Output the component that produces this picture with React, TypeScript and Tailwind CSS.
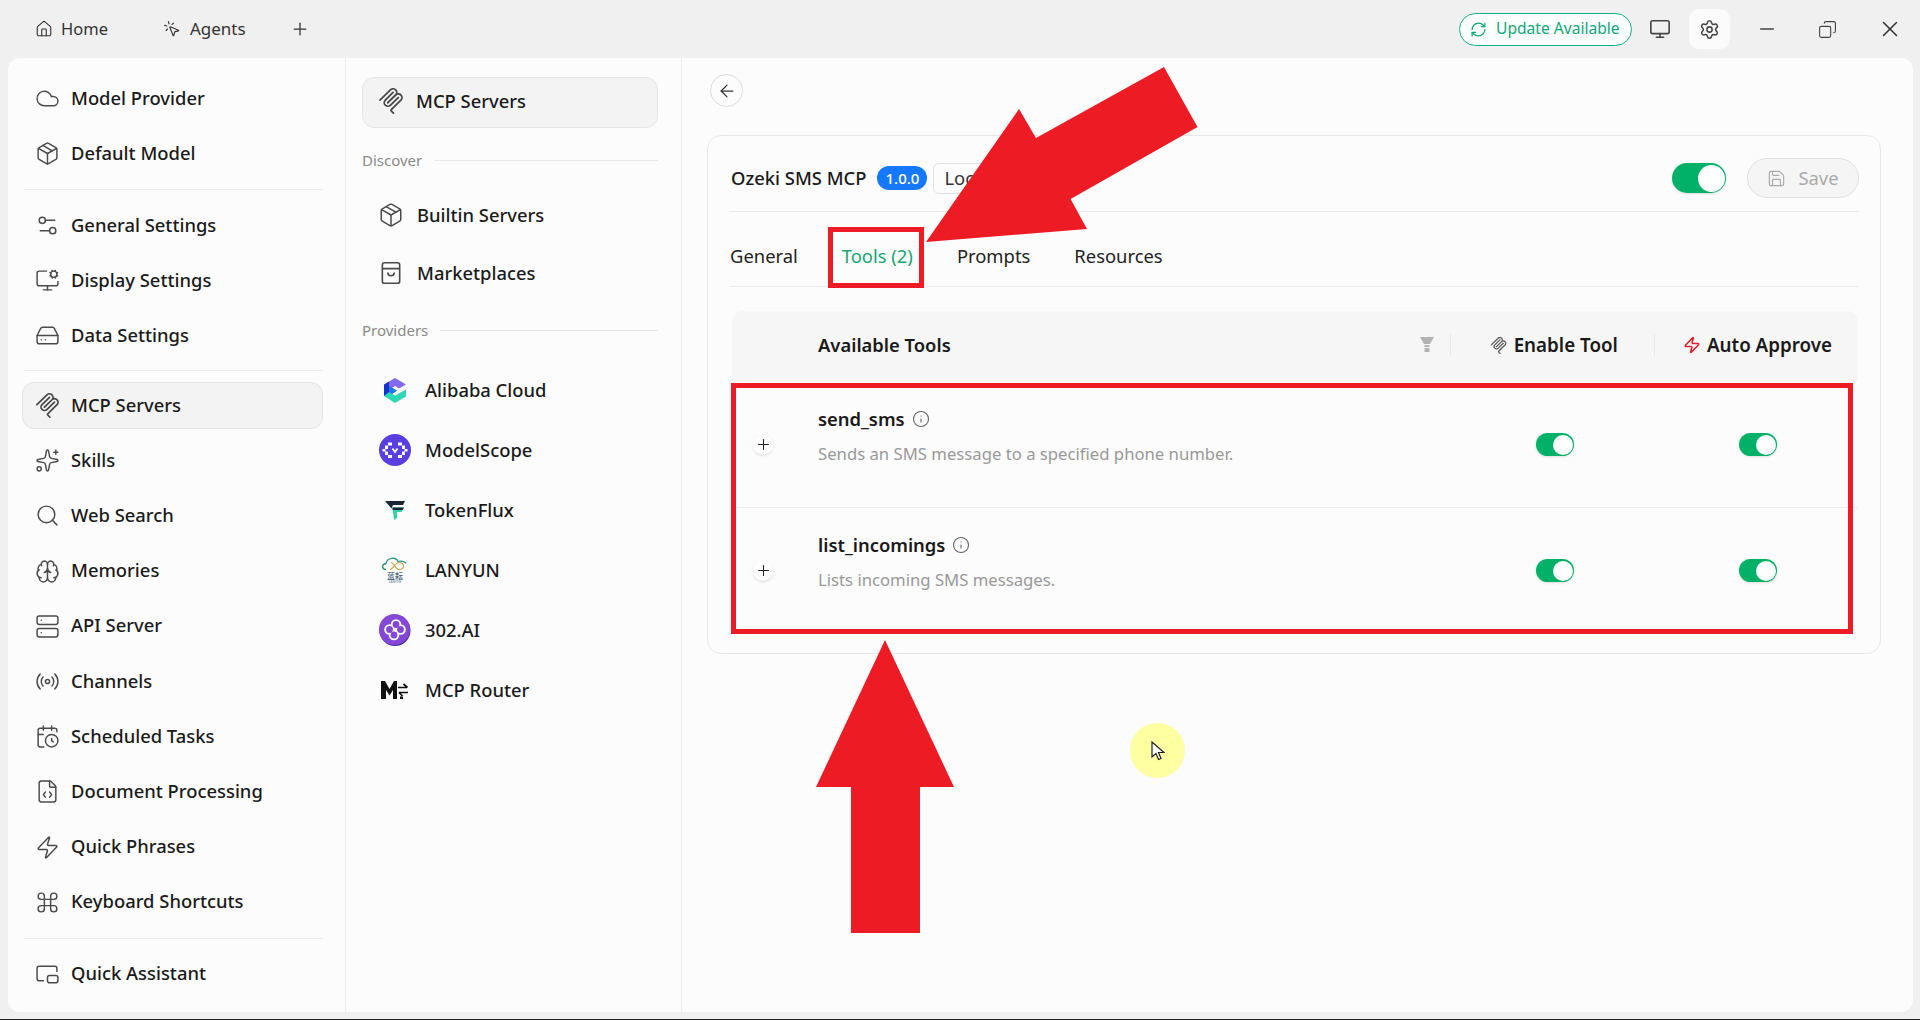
import { ArrowLeft, CalendarClock, Cloud, Command, FileCode, HardDrive, House, Info, Minus, Monitor, MonitorCog, MousePointerClick, Package, PictureInPicture2, Plus, Radio, RefreshCw, Save, Search, Server, Settings, Settings2, Sparkles, Brain, Zap, X, Copy } from 'lucide-react';
import type { ReactNode } from 'react';

const font = { fontFamily: '"Noto Sans", sans-serif' };

function McpIcon({ className = '' }: { className?: string }) {
  return (
    <svg viewBox="0 0 24 24" fill="currentColor" className={className}>
      <path d="M15.688 2.343a2.588 2.588 0 00-3.61 0l-9.626 9.44a.863.863 0 01-1.203 0 .823.823 0 010-1.18l9.626-9.44a4.313 4.313 0 016.016 0 4.116 4.116 0 011.204 3.54 4.3 4.3 0 013.609 1.18l.05.05a4.115 4.115 0 010 5.9l-8.706 8.537a.274.274 0 000 .393l1.788 1.754a.823.823 0 010 1.18.863.863 0 01-1.203 0l-1.788-1.753a1.92 1.92 0 010-2.754l8.706-8.538a2.47 2.47 0 000-3.54l-.05-.049a2.588 2.588 0 00-3.607-.003l-7.172 7.034-.002.002-.098.097a.863.863 0 01-1.204 0 .823.823 0 010-1.18l7.273-7.133a2.47 2.47 0 00-.003-3.537z" />
      <path d="M14.485 4.703a.823.823 0 000-1.18.863.863 0 00-1.204 0l-7.119 6.982a4.115 4.115 0 000 5.9 4.314 4.314 0 006.016 0l7.12-6.982a.823.823 0 000-1.18.863.863 0 00-1.204 0l-7.119 6.982a2.588 2.588 0 01-3.61 0 2.47 2.47 0 010-3.54l7.12-6.982z" />
    </svg>
  );
}

function Toggle({ big = false }: { big?: boolean }) {
  return big ? (
    <div className="flex h-[30px] w-[54px] items-center justify-end rounded-full bg-[#00b167] pr-[1.5px] shadow-sm">
      <div className="h-[27px] w-[27px] rounded-full bg-white" />
    </div>
  ) : (
    <div className="flex h-[23px] w-[38px] items-center justify-end rounded-full bg-[#00b167] pr-[1.5px] shadow-sm">
      <div className="h-[20px] w-[20px] rounded-full bg-white" />
    </div>
  );
}

const icon = 'h-[25px] w-[25px] shrink-0 text-[#4a4a4a]';

function NavItem({ icn, label, active = false }: { icn: ReactNode; label: string; active?: boolean }) {
  return (
    <div className={`flex h-[47px] items-center gap-[11px] rounded-[12px] text-[18.4px] font-medium text-[#1a1a1a] ${active ? 'border border-[#e4e4e4] bg-[#f3f3f3] pl-[12px]' : 'pl-[13px]'}`}>
      {icn}
      <span className="mb-[2px]">{label}</span>
    </div>
  );
}

function Section({ label }: { label: string }) {
  return (
    <div className="flex h-[20px] items-center gap-[12px] text-[15px] text-[#8a8a8a]">
      <span>{label}</span>
      <div className="h-px flex-1 bg-[#e8e8e8]" />
    </div>
  );
}

function Provider({ logo, label }: { logo: ReactNode; label: string }) {
  return (
    <div className="flex h-[60px] items-center gap-[14px] pl-[17px] text-[18.4px] font-medium text-[#1a1a1a]">
      <div className="flex h-[32px] w-[32px] shrink-0 items-center justify-center">{logo}</div>
      <span>{label}</span>
    </div>
  );
}

function AlibabaLogo() {
  return (
    <svg viewBox="0 0 22 25" className="h-[25px] w-[22px]">
      <path d="M11 0 22 6.500 15 10.500 11 8 5 12V3.500z" fill="#8468f0" />
      <path d="M0 6.500 5 3.500V12L13 12.500 5 18H0z" fill="#1733c7" />
      <path d="M5 8 13 12.500 5 17z" fill="#1878f0" />
      <path d="M0 18 5 14 11 17.500 22 11.500V18.500L11 25z" fill="#2fd6b5" />
    </svg>
  );
}

function ModelScopeLogo() {
  return (
    <svg viewBox="0 0 32 32" className="h-[32px] w-[32px]">
      <circle cx="16" cy="16" r="16" fill="#5a3ee0" />
      <path d="M9 8.500h4v3H9zM6 11.500h3V15H6zM3.500 15h3v2.500h-3zM6 17.500h3V21H6zM9 21h4v3H9zM19 8.500h4v3h-4zM23 11.500h3V15h-3zM25.500 15h3v2.500h-3zM23 17.500h3V21h-3zM19 21h4v3h-4z" fill="#fff" />
      <path d="M13.500 14.500l2.500 3.500 2.500-3.500" stroke="#fff" strokeWidth="1.700" fill="none" />
    </svg>
  );
}

function TokenFluxLogo() {
  return (
    <svg viewBox="0 0 20 20" className="h-[20px] w-[20px]">
      <path d="M0 1h20l-2 4H8L6.500 8.500 3 4.500z" fill="#1b2433" />
      <path d="M7.500 7.500H19l-2.500 4.500H12V18l-3 2z" fill="#2dd4a8" />
      <path d="M7.500 7.500H19l-1.500 2.500H7.500z" fill="#1b2433" />
    </svg>
  );
}

function LanyunLogo() {
  return (
    <div className="flex w-[30px] flex-col items-center">
      <svg viewBox="0 0 28 14" className="h-[14px] w-[28px]" fill="none">
        <path d="M5 12.500c-4 0-5-5 0-6 1-6 10-7 12-2 3-1 7 0 8 2" stroke="#2f9a7f" strokeWidth="1.300" />
        <path d="M9 12.500c3 0 5-7 9-7 6 0 6 7 0 7-4 0-5-7-8-7" stroke="#c9a545" strokeWidth="1.100" />
      </svg>
      <span className="text-[8px] leading-[9px] text-[#44607a]" style={{ fontFamily: '"Noto Sans CJK SC", sans-serif' }}>蓝耘</span>
      <span className="text-[3px] leading-[4px] text-[#6b7f92]">LANYUN</span>
    </div>
  );
}

function Ai302Logo() {
  return (
    <svg viewBox="0 0 32 32" className="h-[32px] w-[32px]">
      <circle cx="16" cy="16.500" r="15.500" fill="#3f2a96" />
      <circle cx="15.500" cy="15.500" r="15.500" fill="#8447d8" />
      <g fill="#fff">
        <circle cx="17" cy="10.500" r="5.300" />
        <circle cx="21.500" cy="15.500" r="5.300" />
        <circle cx="15" cy="21" r="5.300" />
        <circle cx="10.500" cy="15.500" r="5.300" />
      </g>
      <g fill="#8447d8">
        <circle cx="17" cy="10.500" r="3.400" />
        <circle cx="21.500" cy="15.500" r="3.400" />
        <circle cx="15" cy="21" r="3.400" />
        <circle cx="10.500" cy="15.500" r="3.400" />
      </g>
    </svg>
  );
}

function McpRouterLogo() {
  return (
    <svg viewBox="0 0 28 18" className="h-[18px] w-[28px]">
      <path d="M0 18V0h4l4.500 8L13 0h3v18h-4V9l-3.500 5.500L5 9v9z" fill="#111" />
      <path d="M17 6.500h9M22.500 3l4 3.500M27 11.500H18M21.500 15L18 11.500" stroke="#111" strokeWidth="1.700" fill="none" />
      <rect x="19" y="15.500" width="3" height="2.500" fill="#111" />
    </svg>
  );
}

function BagIcon() {
  return (
    <svg viewBox="0 0 24 24" fill="none" stroke="currentColor" strokeWidth="1.500" className="h-[26px] w-[26px] text-[#4a4a4a]">
      <rect x="4" y="2.500" width="16" height="19" rx="2" />
      <path d="M4 8h16M9 11.500a3 3 0 0 0 6 0" />
    </svg>
  );
}

export default function App() {
  return (
    <div className="relative flex h-[1020px] w-[1920px] flex-col overflow-hidden bg-[#f0f0f0]" style={font}>
      {/* title bar */}
      <div className="flex h-[58px] shrink-0 items-center pl-[35px] text-[#333]">
        <House className="h-[18px] w-[18px]" strokeWidth={1.5} />
        <span className="ml-[8px] text-[16.500px]">Home</span>
        <MousePointerClick className="ml-[55px] h-[18px] w-[18px]" strokeWidth={1.5} />
        <span className="ml-[9px] text-[17px]">Agents</span>
        <Plus className="ml-[44px] h-[20px] w-[20px]" strokeWidth={1.5} />
        <div className="ml-auto flex h-[33px] w-[173px] items-center gap-[9px] rounded-full border border-[#14b088] bg-[#fafffd] pl-[10px] text-[15.600px] text-[#12a77a]">
          <RefreshCw className="h-[17px] w-[17px]" strokeWidth={1.75} />
          <span>Update Available</span>
        </div>
        <Monitor className="ml-[17px] h-[22px] w-[22px] text-[#444]" strokeWidth={1.75} />
        <div className="ml-[18px] flex h-[40px] w-[41px] items-center justify-center rounded-[10px] bg-[#fbfbfb]">
          <Settings className="h-[21px] w-[21px] text-[#444]" strokeWidth={1.75} />
        </div>
        <Minus className="ml-[26px] h-[22px] w-[22px] text-[#444]" strokeWidth={1.4} />
        <Copy className="ml-[40px] h-[19px] w-[19px] -scale-x-100 text-[#444]" strokeWidth={1.4} />
        <X className="ml-[40px] mr-[17px] h-[26px] w-[26px] text-[#333]" strokeWidth={1.4} />
      </div>

      {/* window body */}
      <div className="ml-[8px] mr-[7px] flex h-[954px] shrink-0 overflow-hidden rounded-[12px] bg-[#fcfcfc]">
        <div className="flex w-[338px] shrink-0 flex-col border-r border-[#ececec] pl-[14px] pr-[22px] pt-[17px]">
          <div className="flex flex-col gap-[8px]">
            <NavItem icn={<Cloud className={icon} strokeWidth={1.4} />} label="Model Provider" />
            <NavItem icn={<Package className={icon} strokeWidth={1.4} />} label="Default Model" />
          </div>
          <div className="my-[12px] ml-[2px] h-px bg-[#ececec]" />
          <div className="flex flex-col gap-[8px]">
            <NavItem icn={<Settings2 className={icon} strokeWidth={1.4} />} label="General Settings" />
            <NavItem icn={<MonitorCog className={icon} strokeWidth={1.4} />} label="Display Settings" />
            <NavItem icn={<HardDrive className={icon} strokeWidth={1.4} />} label="Data Settings" />
          </div>
          <div className="my-[11px] ml-[2px] h-px bg-[#ececec]" />
          <div className="flex flex-col gap-[8.2px]">
            <NavItem active icn={<McpIcon className={icon} />} label="MCP Servers" />
            <NavItem icn={<Sparkles className={icon} strokeWidth={1.4} />} label="Skills" />
            <NavItem icn={<Search className={icon} strokeWidth={1.4} />} label="Web Search" />
            <NavItem icn={<Brain className={icon} strokeWidth={1.4} />} label="Memories" />
            <NavItem icn={<Server className={icon} strokeWidth={1.4} />} label="API Server" />
            <NavItem icn={<Radio className={icon} strokeWidth={1.4} />} label="Channels" />
            <NavItem icn={<CalendarClock className={icon} strokeWidth={1.4} />} label="Scheduled Tasks" />
            <NavItem icn={<FileCode className={icon} strokeWidth={1.4} />} label="Document Processing" />
            <NavItem icn={<Zap className={icon} strokeWidth={1.4} />} label="Quick Phrases" />
            <NavItem icn={<Command className={icon} strokeWidth={1.4} />} label="Keyboard Shortcuts" />
          </div>
          <div className="my-[12px] ml-[2px] h-px bg-[#ececec]" />
          <NavItem icn={<PictureInPicture2 className={icon} strokeWidth={1.4} />} label="Quick Assistant" />
        </div>

        <div className="flex w-[336px] shrink-0 flex-col border-r border-[#ececec] pl-[16px] pr-[23px] pt-[19px]">
          <div className="flex h-[51px] items-center gap-[12px] rounded-[12px] border border-[#e6e6e6] bg-[#f3f3f3] pb-[3px] pl-[15px] text-[18.4px] font-medium text-[#1a1a1a]">
            <McpIcon className="h-[26px] w-[26px] text-[#4a4a4a]" />
            <span>MCP Servers</span>
          </div>
          <div className="mt-[22px]">
            <Section label="Discover" />
          </div>
          <div className="mt-[21px] flex flex-col gap-[10px]">
            <div className="flex h-[48px] items-center gap-[13px] pl-[16px] text-[18.4px] font-medium text-[#1a1a1a]">
              <Package className="h-[26px] w-[26px] text-[#4a4a4a]" strokeWidth={1.4} />
              <span>Builtin Servers</span>
            </div>
            <div className="flex h-[48px] items-center gap-[13px] pl-[16px] text-[18.4px] font-medium text-[#1a1a1a]">
              <BagIcon />
              <span>Marketplaces</span>
            </div>
          </div>
          <div className="mt-[23px]">
            <Section label="Providers" />
          </div>
          <div className="mt-[20px] flex flex-col">
            <Provider logo={<AlibabaLogo />} label="Alibaba Cloud" />
            <Provider logo={<ModelScopeLogo />} label="ModelScope" />
            <Provider logo={<TokenFluxLogo />} label="TokenFlux" />
            <Provider logo={<LanyunLogo />} label="LANYUN" />
            <Provider logo={<Ai302Logo />} label="302.AI" />
            <Provider logo={<McpRouterLogo />} label="MCP Router" />
          </div>
        </div>

        <div className="flex min-w-0 flex-1 flex-col pl-[25px] pr-[32px] pt-[16px]">
          <div className="ml-[3px] flex h-[33px] w-[33px] items-center justify-center rounded-full border border-[#dcdcdc] text-[#333]">
            <ArrowLeft className="h-[20px] w-[20px]" strokeWidth={1.5} />
          </div>
          <div className="mt-[28px] flex h-[519px] flex-col rounded-[14px] border border-[#e8e8e8] pl-[22px] pr-[21px]">
            <div className="flex h-[76px] shrink-0 items-center border-b border-[#e8e8e8] pt-[9px]">
              <span className="ml-[1px] text-[18.4px] font-medium text-[#1a1a1a]">Ozeki SMS MCP</span>
              <span className="ml-[11px] flex h-[24px] w-[50px] items-center justify-center rounded-full bg-[#1677ff] text-[15px] font-medium text-white">1.0.0</span>
              <span className="ml-[6px] flex h-[31px] w-[90px] items-center rounded-[6px] border border-[#e0e0e0] pl-[10px] text-[18.4px] text-[#333]">Local</span>
              <div className="ml-auto"><Toggle big /></div>
              <div className="ml-[21px] flex h-[40px] w-[112px] items-center justify-center gap-[12px] rounded-full border border-[#e0e0e0] bg-[#f5f5f5] text-[18.4px] text-[#aaa]">
                <Save className="h-[19px] w-[19px]" strokeWidth={1.5} />
                <span>Save</span>
              </div>
            </div>
            <div className="flex h-[75px] shrink-0 items-center gap-[44px] border-b border-[#ececec] pb-[8px] pt-[22px] text-[18.4px] text-[#222]">
              <span>General</span>
              <span className="text-[#14a870]">Tools (2)</span>
              <span>Prompts</span>
              <span>Resources</span>
            </div>
            <div className="ml-[2px] mr-[1px] mt-[24px] flex flex-col">
              <div className="flex h-[71px] items-center rounded-t-[10px] bg-[#f6f6f6] pb-[3px] text-[18.8px] font-semibold text-[#1a1a1a]">
                <span className="ml-[86px] text-[18.4px]">Available Tools</span>
                <svg viewBox="0 0 14 16" className="ml-auto h-[16px] w-[14px]" fill="#b3b3b3">
                  <path d="M0 0h14l-4 7H4zM4.500 8h5v2h-5zM4.500 11h5v4h-5z" />
                </svg>
                <div className="ml-[16px] h-[22px] w-px bg-[#e8e8e8]" />
                <McpIcon className="ml-[39px] h-[17px] w-[17px] text-[#555]" />
                <span className="ml-[7px]">Enable Tool</span>
                <div className="ml-[36px] h-[22px] w-px bg-[#e8e8e8]" />
                <Zap className="ml-[28px] h-[18px] w-[18px] text-[#e0202c]" strokeWidth={2} />
                <span className="ml-[6px] mr-[26px]">Auto Approve</span>
              </div>
              <ToolRow name="send_sms" desc="Sends an SMS message to a specified phone number." />
              <div className="h-px bg-[#eeeeee]" />
              <ToolRow name="list_incomings" desc="Lists incoming SMS messages." />
            </div>
          </div>
        </div>
      </div>
      <div className="absolute bottom-0 left-0 h-px w-full bg-[#222]" />

      {/* annotations drawn over the screenshot */}
      <svg viewBox="0 0 1920 1020" className="pointer-events-none absolute left-0 top-0 h-[1020px] w-[1920px]" fill="#ed1c24">
        <polygon points="926,242 1019,109 1036,138 1164,67 1197.500,127 1070.600,199 1087,229" />
        <polygon points="885,640 954,787 920,787 920,933 851,933 851,787 816,787" />
      </svg>
      <div className="absolute left-[828px] top-[227px] h-[61px] w-[96px] border-[5px] border-[#ed1c24]" />
      <div className="absolute left-[731px] top-[383px] h-[251px] w-[1122px] border-[5px] border-[#ed1c24]" />
      <div className="absolute left-[1130px] top-[723px] flex h-[55px] w-[55px] items-center justify-center rounded-full bg-[#feffa0]">
        <svg viewBox="0 0 14 20" className="h-[20px] w-[14px]">
          <path d="M1 1v15l4-3.500 2.500 6 2.500-1-2.500-6H13z" fill="#fff" stroke="#222" strokeWidth="1.200" />
        </svg>
      </div>
    </div>
  );
}

function ToolRow({ name, desc }: { name: string; desc: string }) {
  return (
    <div className="flex h-[125px] items-center">
      <div className="ml-[21px] flex h-[20px] w-[20px] shrink-0 items-center justify-center rounded-full bg-white shadow-sm">
        <Plus className="h-[17px] w-[17px] text-[#222]" strokeWidth={1.5} />
      </div>
      <div className="ml-[45px] flex flex-col gap-[12px] pb-[17px]">
        <div className="flex items-center gap-[7px]">
          <span className="text-[18.400px] font-semibold leading-[24px] text-[#1a1a1a]">{name}</span>
          <Info className="h-[18px] w-[18px] text-[#666]" strokeWidth={1.5} />
        </div>
        <span className="text-[16.700px] leading-[22px] text-[#999]">{desc}</span>
      </div>
      <div className="ml-auto"><Toggle /></div>
      <div className="ml-[165px] mr-[81px]"><Toggle /></div>
    </div>
  );
}
